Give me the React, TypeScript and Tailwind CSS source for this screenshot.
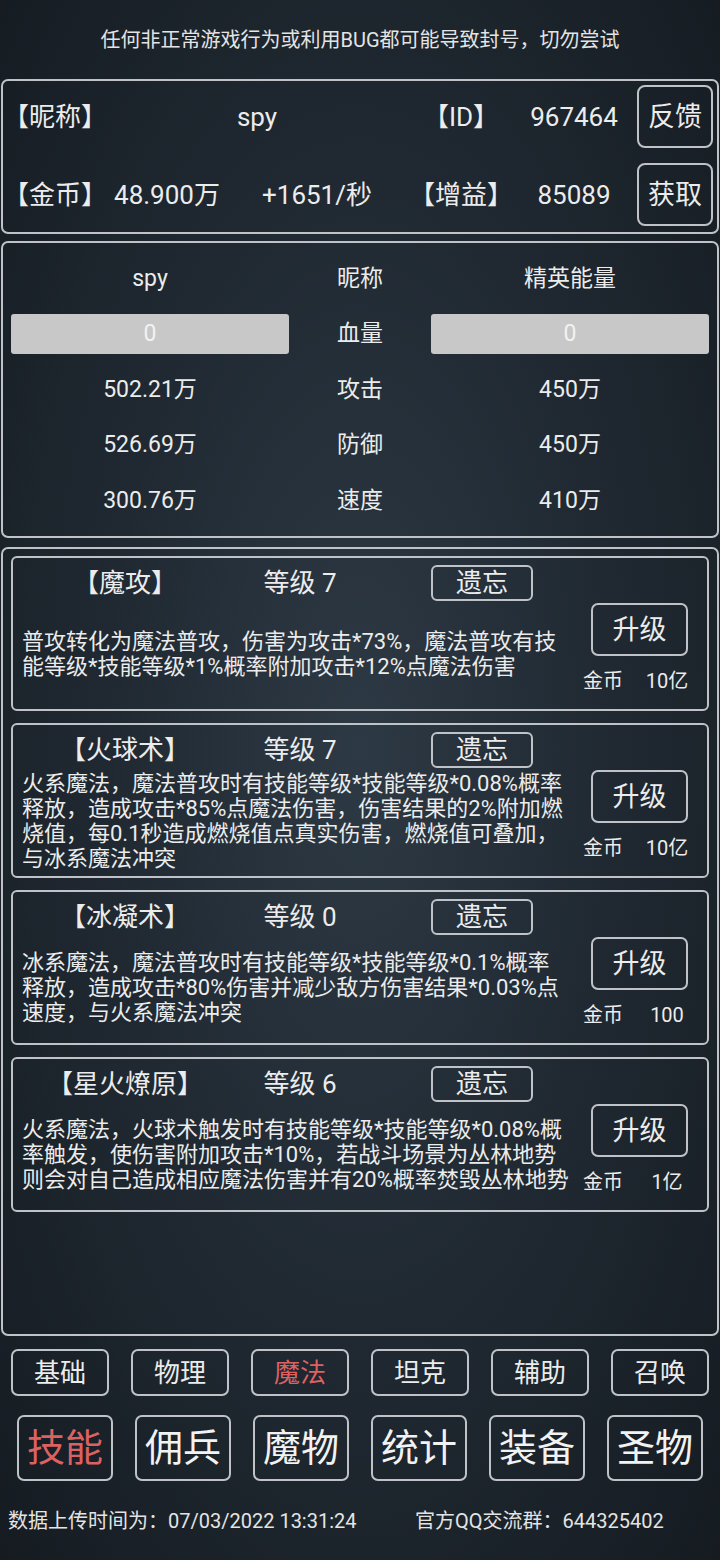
const skills = [
  {
    name: "【魔攻】",
    level: "等级 7",
    lines: ["普攻转化为魔法普攻，伤害为攻击*73%，魔法普攻有技", "能等级*技能等级*1%概率附加攻击*12%点魔法伤害"],
    cost: "10亿",
  },
  {
    name: "【火球术】",
    level: "等级 7",
    lines: [
      "火系魔法，魔法普攻时有技能等级*技能等级*0.08%概率",
      "释放，造成攻击*85%点魔法伤害，伤害结果的2%附加燃",
      "烧值，每0.1秒造成燃烧值点真实伤害，燃烧值可叠加，",
      "与冰系魔法冲突",
    ],
    cost: "10亿",
  },
  {
    name: "【冰凝术】",
    level: "等级 0",
    lines: ["冰系魔法，魔法普攻时有技能等级*技能等级*0.1%概率", "释放，造成攻击*80%伤害并减少敌方伤害结果*0.03%点", "速度，与火系魔法冲突"],
    cost: "100",
  },
  {
    name: "【星火燎原】",
    level: "等级 6",
    lines: [
      "火系魔法，火球术触发时有技能等级*技能等级*0.08%概",
      "率触发，使伤害附加攻击*10%，若战斗场景为丛林地势",
      "则会对自己造成相应魔法伤害并有20%概率焚毁丛林地势",
    ],
    cost: "1亿",
  },
];

const stats = [
  { left: "502.21万", label: "攻击", right: "450万" },
  { left: "526.69万", label: "防御", right: "450万" },
  { left: "300.76万", label: "速度", right: "410万" },
];

const subTabs = ["基础", "物理", "魔法", "坦克", "辅助", "召唤"];
const mainTabs = ["技能", "佣兵", "魔物", "统计", "装备", "圣物"];

function SkillCard({ skill }: { skill: (typeof skills)[number] }) {
  return (
    <div className="h-[155px] border-2 border-[#bfc3c7] rounded-[6px] flex flex-col">
      {/* title row */}
      <div className="mt-[7px] h-[36px] flex items-center text-[26px] leading-[30px]">
        <div className="w-[224px] text-center">{skill.name}</div>
        <div className="w-[126px] text-center">{skill.level}</div>
        <button className="ml-[68px] w-[102px] h-[36px] border-2 border-[#bfc3c7] rounded-[6px] flex items-center justify-center text-[26px] leading-[30px]">
          遗忘
        </button>
      </div>
      {/* body */}
      <div className="flex-1 flex">
        <div className="w-[563px] pl-[9px] pb-[3px] flex flex-col justify-center text-[22px] leading-[25px] whitespace-nowrap">
          {skill.lines.map((l) => (
            <div key={l}>{l}</div>
          ))}
        </div>
        <div className="w-[127px] flex flex-col items-center pt-[2px]">
          <button className="w-[97px] h-[53px] border-2 border-[#bfc3c7] rounded-[7px] flex items-center justify-center text-[27px] leading-[32px]">
            升级
          </button>
          <div className="mt-[13px] w-full flex items-center text-[20px] leading-[24px]">
            <span className="ml-[7px]">金币</span>
            <span className="ml-[19px] w-[50px] text-center">{skill.cost}</span>
          </div>
        </div>
      </div>
    </div>
  );
}

export default function App() {
  return (
    <div
      className="w-[720px] h-[1560px] overflow-hidden text-[#ececec] bg-[radial-gradient(ellipse_at_50%_48%,#2d3944_0%,#202932_50%,#151b21_100%)] flex flex-col"
      style={{ fontFamily: "Roboto, 'Noto Sans CJK SC', sans-serif" }}
    >
      {/* notice */}
      <div className="h-[79px] flex items-center justify-center text-[20px] leading-[26px] text-[#e4e4e4]">
        任何非正常游戏行为或利用BUG都可能导致封号，切勿尝试
      </div>

      {/* account panel */}
      <div className="mx-[1px] h-[155px] border-2 border-[#bfc3c7] rounded-[7px] pt-[4px] pr-[4px] flex flex-col gap-[15px] text-[26px] leading-[30px]">
        <div className="h-[63px] flex items-center">
          <div className="w-[100px] text-center">【昵称】</div>
          <div className="w-[308px] text-center">spy</div>
          <div className="w-[100px] text-center">【ID】</div>
          <div className="w-[126px] text-center">967464</div>
          <button className="ml-auto w-[76px] h-[63px] border-2 border-[#bfc3c7] rounded-[8px] flex items-center justify-center text-[27px]">
            反馈
          </button>
        </div>
        <div className="h-[63px] flex items-center">
          <div className="w-[100px] text-center">【金币】</div>
          <div className="w-[128px] text-center">48.900万</div>
          <div className="w-[172px] text-center">+1651/秒</div>
          <div className="w-[116px] text-center">【增益】</div>
          <div className="w-[110px] text-center">85089</div>
          <button className="ml-auto w-[76px] h-[63px] border-2 border-[#bfc3c7] rounded-[8px] flex items-center justify-center text-[27px]">
            获取
          </button>
        </div>
      </div>

      {/* battle stats */}
      <div className="mt-[7px] mx-[1px] h-[297px] border-2 border-[#bfc3c7] rounded-[7px] pt-[8px] px-[8px] text-[23px] leading-[28px]">
        <div className="h-[55.5px] grid grid-cols-[278px_142px_278px] items-center text-center">
          <div>spy</div>
          <div>昵称</div>
          <div>精英能量</div>
        </div>
        <div className="h-[55.5px] grid grid-cols-[278px_142px_278px] items-center text-center">
          <div className="h-[40px] bg-[#c8c8c8] rounded-[3px] flex items-center justify-center text-[#f2f2f2]">0</div>
          <div>血量</div>
          <div className="h-[40px] bg-[#c8c8c8] rounded-[3px] flex items-center justify-center text-[#f2f2f2]">0</div>
        </div>
        {stats.map((s) => (
          <div key={s.label} className="h-[55.5px] grid grid-cols-[278px_142px_278px] items-center text-center">
            <div>{s.left}</div>
            <div>{s.label}</div>
            <div>{s.right}</div>
          </div>
        ))}
      </div>

      {/* skills */}
      <div className="mt-[9px] mx-[1px] h-[789px] border-2 border-[#bfc3c7] rounded-[7px] pt-[7px] px-[8px] flex flex-col gap-[12px]">
        {skills.map((s) => (
          <SkillCard key={s.name} skill={s} />
        ))}
      </div>

      {/* sub tabs */}
      <div className="mt-[13px] px-[11px] flex gap-[22px]">
        {subTabs.map((t) => (
          <button
            key={t}
            className={`w-[98px] h-[47px] border-2 border-[#bfc3c7] rounded-[7px] flex items-center justify-center text-[26px] leading-[30px] ${
              t === "魔法" ? "text-[#dc6262]" : "text-[#ececec]"
            }`}
          >
            {t}
          </button>
        ))}
      </div>

      {/* main tabs */}
      <div className="mt-[19px] px-[17px] flex gap-[22px]">
        {mainTabs.map((t) => (
          <button
            key={t}
            className={`w-[96px] h-[66px] border-2 border-[#bfc3c7] rounded-[7px] flex items-center justify-center text-[38px] leading-[44px] ${
              t === "技能" ? "text-[#dc6262]" : "text-[#f2f2f2]"
            }`}
          >
            {t}
          </button>
        ))}
      </div>

      {/* footer */}
      <div className="mt-[28px] h-[24px] flex items-center text-[20px] leading-[24px] text-[#e4e4e4]">
        <div className="ml-[8px] w-[407px]">数据上传时间为：07/03/2022 13:31:24</div>
        <div>官方QQ交流群：644325402</div>
      </div>
    </div>
  );
}
